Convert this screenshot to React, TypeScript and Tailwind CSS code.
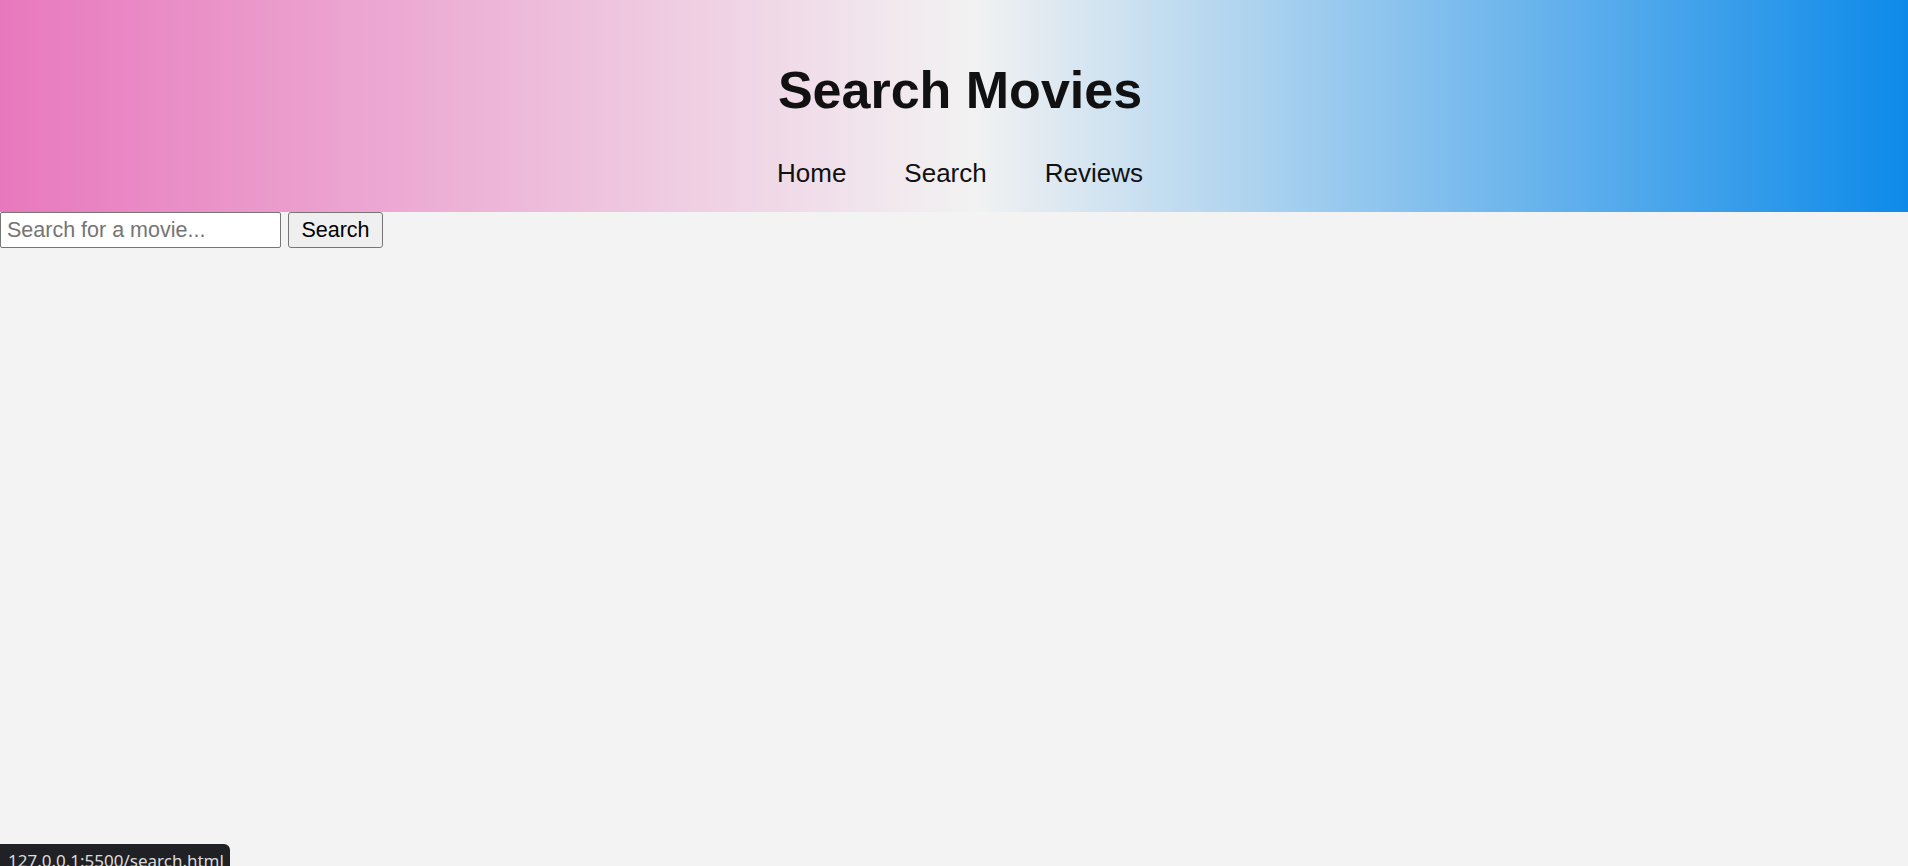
import { useState } from "react";

function Header() {
  const links = ["Home", "Search", "Reviews"];

  return (
    <header className="h-[212px] pl-[12px] pt-[60px] bg-[linear-gradient(to_right,#e878bd,#f2f2f2_51%,#0d8ae9)] text-[#111]">
      <h1 className="text-center text-[52px] leading-[60px] font-bold">Search Movies</h1>
      <nav className="mt-[38px]">
        <ul className="flex justify-center gap-[58px] text-[26px] leading-[30px]">
          {links.map((link) => (
            <li key={link}>
              <a href="#">{link}</a>
            </li>
          ))}
        </ul>
      </nav>
    </header>
  );
}

export default function App() {
  const [query, setQuery] = useState("");

  return (
    <div className="min-h-[866px] bg-[#f3f3f3] font-['Liberation_Sans',Arial,sans-serif]">
      <Header />

      <div className="flex items-start gap-[7px]">
        <input
          value={query}
          onChange={(e) => setQuery(e.target.value)}
          placeholder="Search for a movie..."
          className="w-[281px] h-[36px] px-[6px] text-[21.5px] bg-white border border-[#767676] rounded-[2px] placeholder:text-[#757575] outline-none"
        />
        <button className="w-[95px] h-[36px] text-[21.5px] text-black bg-[#efefef] border border-[#767676] rounded-[3px]">
          Search
        </button>
      </div>

      {/* browser status bubble */}
      <div className="fixed left-0 bottom-0 h-[22px] w-[230px] overflow-hidden rounded-tr-[6px] bg-[#202124] pl-[8px] pt-[6px] font-['Noto_Sans',sans-serif] text-[17px] leading-[22px] text-[#dcdcdc]">
        127.0.0.1:5500/search.html
      </div>
    </div>
  );
}
